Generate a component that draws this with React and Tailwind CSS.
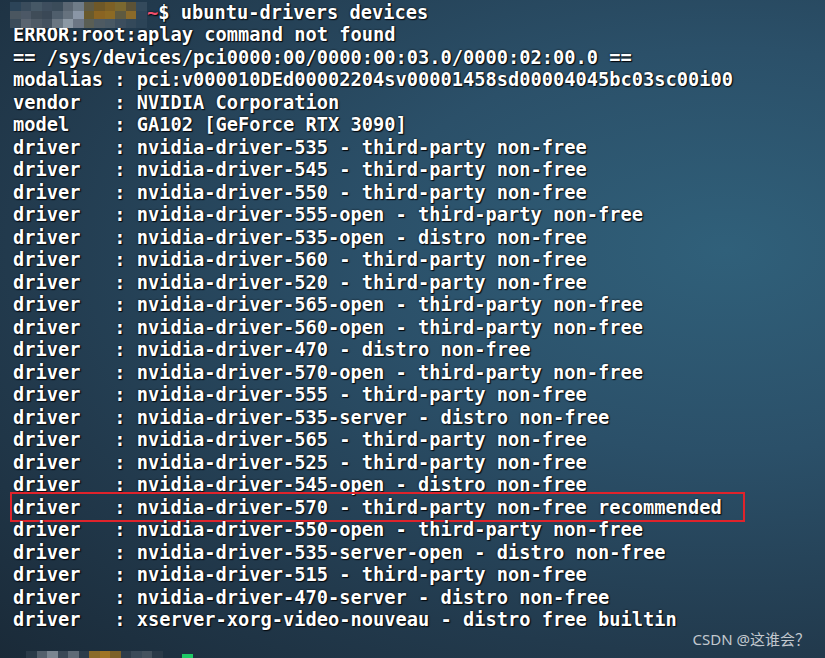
import React from 'react'

const drivers = [
  'nvidia-driver-535 - third-party non-free',
  'nvidia-driver-545 - third-party non-free',
  'nvidia-driver-550 - third-party non-free',
  'nvidia-driver-555-open - third-party non-free',
  'nvidia-driver-535-open - distro non-free',
  'nvidia-driver-560 - third-party non-free',
  'nvidia-driver-520 - third-party non-free',
  'nvidia-driver-565-open - third-party non-free',
  'nvidia-driver-560-open - third-party non-free',
  'nvidia-driver-470 - distro non-free',
  'nvidia-driver-570-open - third-party non-free',
  'nvidia-driver-555 - third-party non-free',
  'nvidia-driver-535-server - distro non-free',
  'nvidia-driver-565 - third-party non-free',
  'nvidia-driver-525 - third-party non-free',
  'nvidia-driver-545-open - distro non-free',
  'nvidia-driver-570 - third-party non-free recommended',
  'nvidia-driver-550-open - third-party non-free',
  'nvidia-driver-535-server-open - distro non-free',
  'nvidia-driver-515 - third-party non-free',
  'nvidia-driver-470-server - distro non-free',
  'xserver-xorg-video-nouveau - distro free builtin',
]

// pixelated (mosaic) username@host
const mosaicTop = [
  ['#2c4458', '#3a4c5c', '#465866', '#3e4e5e', '#3b4c5a', '#5a6672', '#6f7c88', '#5e5a44', '#6e5828', '#7c6026', '#7a6830', '#5c5236', '#344a5c'],
  ['#4a5660', '#4c5866', '#3f4c58', '#3a4856', '#4f5e6c', '#66727e', '#8a96a6', '#6a5a2c', '#8a6422', '#8c6a24', '#5e5a40', '#8a6a2a', '#2f4558'],
  ['#3c4c5a', '#5a6470', '#4e5a66', '#445260', '#6a7682', '#8c98a4', '#6c7684', '#5a5e54', '#4e5a62', '#485864', '#3c4e5e', '#34495a', '#2c4457'],
]

const mosaicBottom = ['#2a3a48', '#54606c', '#7a8590', '#3a4856', '#5e6a76', '#2c3c4a', '#8a6a2a', '#a07424', '#7c6028', '#2c3c4a', '#3a4a58', '#44525e', '#2a3a48']

function Line({ children }) {
  return <div className="h-[22.5px] leading-[22.5px] whitespace-pre">{children}</div>
}

export default function App() {
  return (
    <div className="relative w-[825px] h-[658px] overflow-hidden bg-[radial-gradient(ellipse_at_88%_38%,#30607a_0%,#2b5069_35%,#223a4d_70%,#1a2a38_100%)]">
      <div className="pl-[13px] pt-[1.5px] font-['DejaVu_Sans_Mono','Liberation_Mono',monospace] font-bold text-[18.7px] text-white [text-shadow:1px_1px_1px_#05080c,0_0_2px_#000]">
        <Line>
          <span className="inline-block w-[134px]"></span>
          <span className="text-[#f0506e]">~</span>$ ubuntu-drivers devices
        </Line>
        <Line>ERROR:root:aplay command not found</Line>
        <Line>== /sys/devices/pci0000:00/0000:00:03.0/0000:02:00.0 ==</Line>
        <Line>modalias : pci:v000010DEd00002204sv00001458sd00004045bc03sc00i00</Line>
        <Line>vendor   : NVIDIA Corporation</Line>
        <Line>model    : GA102 [GeForce RTX 3090]</Line>
        {drivers.map((d) => (
          <div key={d} className="relative h-[22.5px] leading-[22.5px] whitespace-pre">
            driver   : {d}
            {d.endsWith('recommended') && (
              <span className="absolute left-[-3px] top-[-4.5px] w-[735px] h-[30px] border-2 border-[#e0232b]"></span>
            )}
          </div>
        ))}
        <Line> </Line>
        <Line>
          <span className="inline-block w-[169px]"></span>
          <span className="inline-block w-[11px] h-[20px] align-top bg-[#1ec864]"></span>
        </Line>
      </div>

      {/* blurred prompt, top */}
      <div className="absolute left-[10px] top-[2px] flex flex-col blur-[0.6px]">
        {mosaicTop.map((row, r) => (
          <div key={r} className="flex">
            {row.map((c, i) => (
              <span key={i} className="w-[10.5px] h-[8.5px]" style={{ backgroundColor: c }}></span>
            ))}
          </div>
        ))}
      </div>

      {/* blurred prompt, bottom */}
      <div className="absolute left-[26px] top-[651px] flex blur-[0.6px]">
        {mosaicBottom.map((c, i) => (
          <span key={i} className="w-[10.5px] h-[7px]" style={{ backgroundColor: c }}></span>
        ))}
      </div>

      <div className="absolute right-[15px] top-[628px] text-[15px] text-[#c2c8ce] font-['Noto_Sans','Noto_Sans_CJK_SC',sans-serif]">
        CSDN @这谁会？
      </div>
    </div>
  )
}
